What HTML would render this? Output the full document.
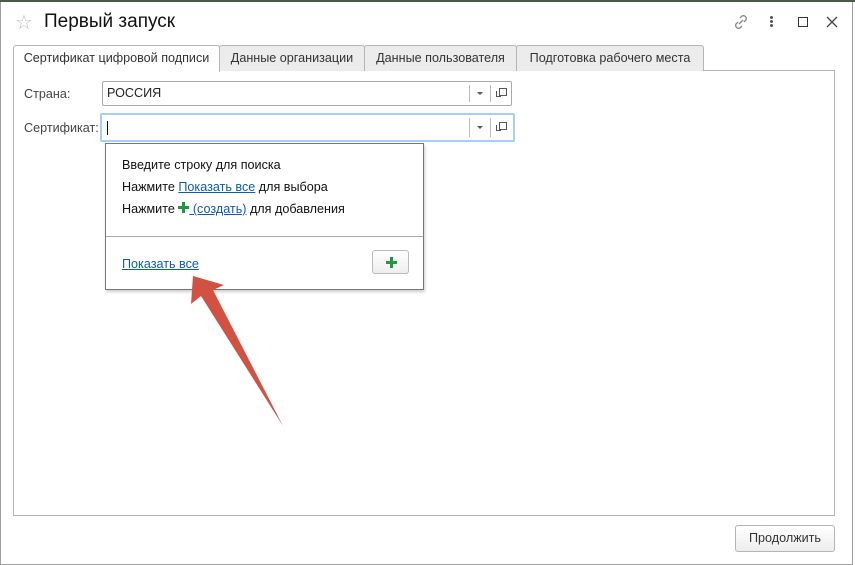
<!DOCTYPE html>
<html><head><meta charset="utf-8"><style>
*{box-sizing:border-box;margin:0;padding:0}
body{width:855px;height:565px;overflow:hidden;background:#fff;font-family:"Liberation Sans",Arial,sans-serif;font-size:12.6px;color:#333;position:relative}
.a{position:absolute}
.tab{position:absolute;top:45px;height:26px;border:1px solid #b5b5b5;border-bottom:none;background:#ececec;border-radius:3px 3px 0 0;line-height:24px;text-align:center;color:#333}
.inp{position:absolute;border:1px solid #aaa;border-radius:2px;background:#fff}
.lnk{color:#0d5cb5;text-decoration:underline}
</style></head><body>
<div class="a" style="left:0;top:0;width:855px;height:2px;background:#4a5a48"></div>
<div class="a" style="left:0;top:2px;width:853px;height:563px;border:1px solid #a0a0a0;border-top:none"></div>
<div class="a" style="left:15px;top:10px;font-size:20px;color:#bbb">☆</div>
<div class="a" style="left:44px;top:11px;font-size:19px;color:#111">Первый запуск</div>
<svg class="a" style="left:732px;top:13px" width="18" height="18" viewBox="0 0 18 18" fill="none" stroke="#888" stroke-width="1.3"><path d="M8 5l2-2a3 3 0 0 1 4 4l-2 2M10 13l-2 2a3 3 0 0 1-4-4l2-2M7 11l4-4"/></svg>
<div class="a" style="left:770px;top:16px;width:3px;height:3px;background:#555;border-radius:50%;box-shadow:0 4px 0 #555,0 8px 0 #555"></div>
<div class="a" style="left:798px;top:17px;width:10px;height:10px;border:1.5px solid #333"></div>
<svg class="a" style="left:826px;top:16px" width="12" height="12" viewBox="0 0 12 12" stroke="#444" stroke-width="1.3"><path d="M1 1l10 10M11 1L1 11"/></svg>
<div class="a" style="left:13px;top:70px;width:822px;height:446px;border:1px solid #b5b5b5"></div>
<div class="tab" style="left:13px;width:207px;background:#fff;height:27px">Сертификат цифровой подписи</div>
<div class="tab" style="left:219px;width:146px">Данные организации</div>
<div class="tab" style="left:364px;width:153px">Данные пользователя</div>
<div class="tab" style="left:516px;width:188px">Подготовка рабочего места</div>
<div class="a" style="left:24px;top:87px;color:#444">Страна:</div>
<div class="inp" style="left:102px;top:81px;width:410px;height:25px"><span class="a" style="left:4px;top:4px;color:#222">РОССИЯ</span>
<div class="a" style="left:366px;top:3px;width:1px;height:17px;background:#bbb"></div><div class="a" style="left:387px;top:3px;width:1px;height:17px;background:#bbb"></div>
<div class="a" style="left:374px;top:10px;border:3px solid transparent;border-top:3px solid #555"></div>
<div class="a" style="left:396px;top:6px;width:8px;height:8px;border:1px solid #555"></div><div class="a" style="left:393px;top:9px;width:5px;height:6px;border-left:1px solid #555;border-bottom:1px solid #555"></div></div>
<div class="a" style="left:24px;top:121px;color:#444">Сертификат:</div>
<div class="inp" style="left:100px;top:113px;width:415px;height:29px;border:2px solid #a6cff5"><div class="a" style="left:5px;top:6px;width:1px;height:14px;background:#111"></div>
<div class="a" style="left:367px;top:3px;width:1px;height:19px;background:#bbb"></div><div class="a" style="left:388px;top:3px;width:1px;height:19px;background:#bbb"></div>
<div class="a" style="left:375px;top:11px;border:3px solid transparent;border-top:3px solid #555"></div>
<div class="a" style="left:397px;top:7px;width:8px;height:8px;border:1px solid #555"></div><div class="a" style="left:394px;top:10px;width:5px;height:6px;border-left:1px solid #555;border-bottom:1px solid #555"></div></div>
<div class="a" style="left:105px;top:143px;width:319px;height:147px;border:1px solid #777;background:#fff;box-shadow:1px 2px 3px rgba(0,0,0,.2);color:#111">
<div class="a" style="left:16px;top:14px">Введите строку для поиска</div>
<div class="a" style="left:16px;top:36px">Нажмите <span class="lnk">Показать все</span> для выбора</div>
<div class="a" style="left:16px;top:58px">Нажмите <svg width="11" height="11" viewBox="0 0 11 11" style="vertical-align:0"><path d="M4 0h3v4h4v3H7v4H4V7H0V4h4z" fill="#1f9a3f"/></svg><span class="lnk"> (создать)</span> для добавления</div>
<div class="a" style="left:0;top:92px;width:317px;height:1px;background:#aaa"></div>
<div class="a lnk" style="left:16px;top:113px">Показать все</div>
<div class="a" style="left:266px;top:106px;width:37px;height:24px;border:1px solid #bbb;border-radius:3px;background:linear-gradient(#fff,#eee)"><svg class="a" style="left:13px;top:6px" width="11" height="11" viewBox="0 0 11 11"><path d="M4 0h3v4h4v3H7v4H4V7H0V4h4z" fill="#1f9a3f"/></svg></div>
</div>
<svg class="a" style="left:0;top:0" width="855" height="565"><polygon points="193,276 224,285 213,290 283,426 201,296 191,304" fill="#d15142"/></svg>
<div class="a" style="left:735px;top:525px;width:100px;height:27px;border:1px solid #b5b5b5;border-radius:3px;background:linear-gradient(#fff,#ededed);text-align:center;line-height:25px;color:#333">Продолжить</div>
</body></html>
